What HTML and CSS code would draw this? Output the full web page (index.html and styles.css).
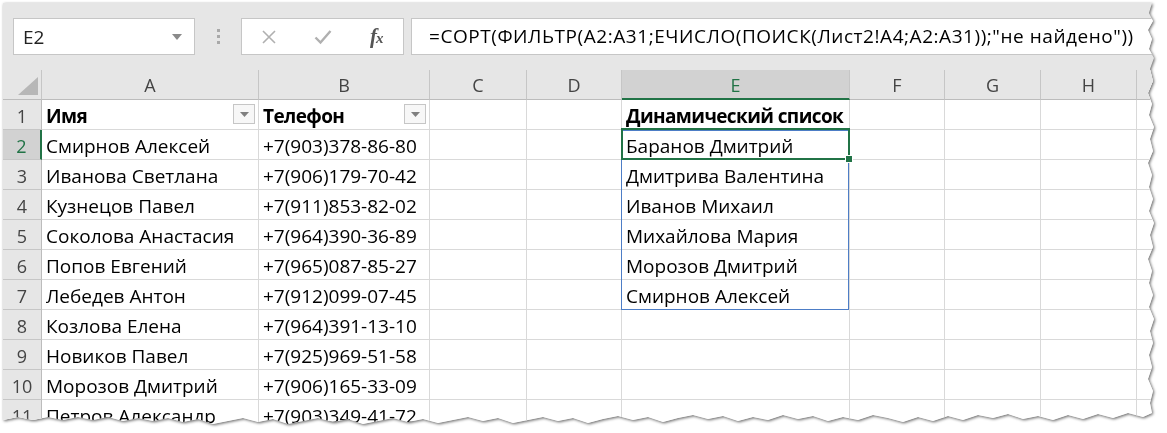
FILE: index.html
```html
<!DOCTYPE html>
<html lang="ru">
<head>
  <meta charset="UTF-8" />
  <title>Динамический список</title>
  <link rel="stylesheet" href="styles.css">
</head>
<body>
  <div class="shot">
    <div class="sheet">
      <div class="formula-bar">
        <div class="name-box">
          <span class="name">E2</span>
          <svg class="name-arrow" width="10" height="6" viewBox="0 0 10 6"><path d="M0 0h10L5 6z" fill="#8a8a8a"/></svg>
        </div>
        <div class="grip"><span></span><span></span><span></span></div>
        <div class="fx-buttons">
          <div class="fx-btn">
            <svg width="16" height="16" viewBox="0 0 16 16"><path d="M2 2l12 12M14 2L2 14" stroke="#b0b0b0" stroke-width="1.6" fill="none"/></svg>
          </div>
          <div class="fx-btn">
            <svg width="18" height="16" viewBox="0 0 18 16"><path d="M1.5 8.5l5 5L16.5 2" stroke="#b0b0b0" stroke-width="2.4" fill="none"/></svg>
          </div>
          <div class="fx-btn"><span class="fx">f<span class="fx-x">x</span></span></div>
        </div>
        <div class="formula">=СОРТ(ФИЛЬТР(A2:A31;ЕЧИСЛО(ПОИСК(Лист2!A4;A2:A31));"не найдено"))</div>
      </div>
      <div class="grid" id="grid"></div>
    </div>
  </div>

  <script>
    const grid = document.getElementById('grid');
    const letters = ['A', 'B', 'C', 'D', 'E', 'F', 'G', 'H', ''];

    const names = ['Имя', 'Смирнов Алексей', 'Иванова Светлана', 'Кузнецов Павел', 'Соколова Анастасия',
      'Попов Евгений', 'Лебедев Антон', 'Козлова Елена', 'Новиков Павел', 'Морозов Дмитрий', 'Петров Александр', 'Сидорова Ольга'];
    const phones = ['Телефон', '+7(903)378-86-80', '+7(906)179-70-42', '+7(911)853-82-02', '+7(964)390-36-89',
      '+7(965)087-85-27', '+7(912)099-07-45', '+7(964)391-13-10', '+7(925)969-51-58', '+7(906)165-33-09', '+7(903)349-41-72', '+7(916)402-17-33'];
    const sorted = ['Динамический список', 'Баранов Дмитрий', 'Дмитрива Валентина', 'Иванов Михаил',
      'Михайлова Мария', 'Морозов Дмитрий', 'Смирнов Алексей'];

    function cell(cls, text) {
      const div = document.createElement('div');
      div.className = cls;
      if (text) div.textContent = text;
      grid.appendChild(div);
      return div;
    }

    function filterBtn(parent) {
      const btn = document.createElement('span');
      btn.className = 'filter-btn';
      btn.innerHTML = '<svg width="9" height="5" viewBox="0 0 9 5"><path d="M0 0h9L4.5 5z" fill="#7f7f7f"/></svg>';
      parent.appendChild(btn);
    }

    // header row
    const corner = cell('head corner');
    corner.innerHTML = '<span class="corner-tri"></span>';
    letters.forEach(l => cell('head' + (l === 'E' ? ' active-col' : ''), l));

    for (let r = 1; r <= 12; r++) {
      const i = r - 1;
      cell('rowhead' + (r === 2 ? ' active-row' : ''), String(r));
      letters.forEach(l => {
        let text = '';
        if (l === 'A') text = names[i];
        if (l === 'B') text = phones[i];
        if (l === 'E') text = sorted[i] || '';
        const c = cell('cell' + (r === 1 && text ? ' bold' : ''), text);

        if (r === 1 && (l === 'A' || l === 'B')) filterBtn(c);
        if (r === 2 && l === 'E') {
          c.insertAdjacentHTML('beforeend', '<span class="spill"></span><span class="selection"><span class="handle"></span></span>');
        }
      });
    }
  </script>
</body>
</html>
```

FILE: styles.css
```css
body {
  margin: 0;
  background: #fff;
  font-family: "Open Sans", Arial, sans-serif;
}

.shot {
  width: 1156px;
  height: 428px;
  margin: 3px 0 0 3px;
  filter: drop-shadow(1px 1px 1.5px rgba(0, 0, 0, 0.6));
}

.sheet {
  height: 100%;
  background: #e6e6e6;
  overflow: hidden;
  clip-path: polygon(0 0, 1149px 0, 1146px 10px, 1150px 18px, 1145px 27px, 1149px 36px, 1146px 46px,
    1151px 55px, 1147px 66px, 1150px 78px, 1145px 90px, 1149px 101px, 1146px 112px, 1151px 124px,
    1147px 136px, 1150px 148px, 1145px 160px, 1149px 172px, 1146px 184px, 1150px 196px, 1146px 208px,
    1151px 220px, 1147px 232px, 1150px 244px, 1145px 256px, 1149px 268px, 1146px 280px, 1150px 292px,
    1146px 304px, 1151px 316px, 1147px 328px, 1150px 340px, 1146px 352px, 1149px 364px, 1145px 376px,
    1150px 388px, 1147px 400px, 1149px 410px,
    1140px 414px, 1125px 410px, 1110px 415px, 1095px 411px, 1080px 416px, 1065px 412px, 1050px 417px,
    1035px 413px, 1020px 416px, 1005px 411px, 990px 415px, 975px 412px, 960px 417px, 945px 413px,
    930px 418px, 915px 414px, 900px 419px, 885px 415px, 870px 412px, 855px 417px, 840px 414px,
    825px 418px, 810px 413px, 795px 416px, 780px 412px, 765px 417px, 750px 414px, 735px 418px,
    720px 413px, 705px 416px, 690px 412px, 675px 415px, 660px 419px, 645px 414px, 630px 417px,
    615px 413px, 600px 416px, 585px 420px, 570px 415px, 555px 418px, 540px 414px, 525px 417px,
    510px 420px, 495px 415px, 480px 418px, 465px 414px, 450px 417px, 435px 420px, 420px 416px,
    405px 419px, 390px 415px, 375px 418px, 360px 421px, 345px 416px, 330px 419px, 315px 415px,
    300px 418px, 285px 421px, 270px 416px, 255px 419px, 240px 415px, 225px 418px, 210px 421px,
    195px 416px, 180px 419px, 165px 415px, 150px 418px, 135px 415px, 120px 418px, 105px 414px,
    90px 417px, 75px 414px, 60px 417px, 45px 414px, 30px 417px, 15px 414px, 0 417px);
}

/* formula bar */

.formula-bar {
  display: flex;
  align-items: center;
  height: 67px;
  padding-left: 10px;
}

.name-box {
  width: 182px;
  height: 37px;
  box-sizing: border-box;
  background: #fff;
  border: 1px solid #c6c6c6;
  display: flex;
  align-items: center;
  justify-content: space-between;
  padding: 0 12px 0 9px;
}

.name {
  font-size: 19px;
  color: #222;
}

.grip {
  width: 46px;
  display: flex;
  flex-direction: column;
  align-items: center;
  gap: 3px;
}

.grip span {
  width: 3px;
  height: 3px;
  background: #a9a9a9;
}

.fx-buttons {
  width: 163px;
  height: 37px;
  box-sizing: border-box;
  background: #fff;
  border: 1px solid #c6c6c6;
  display: flex;
}

.fx-btn {
  width: 54px;
  display: flex;
  align-items: center;
  justify-content: center;
}

.fx {
  font-family: "Liberation Serif", "Times New Roman", serif;
  font-style: italic;
  font-weight: 700;
  font-size: 21px;
  color: #555;
  letter-spacing: -1px;
}

.fx-x {
  font-size: 15px;
}

.formula {
  flex: 1;
  margin-left: 7px;
  height: 37px;
  box-sizing: border-box;
  background: #fff;
  border: 1px solid #c6c6c6;
  padding-left: 17px;
  font-size: 19px;
  letter-spacing: 0.55px;
  line-height: 35px;
  color: #000;
  white-space: nowrap;
}

/* grid */

.grid {
  display: grid;
  grid-template-columns: 39px 217px 171px 97px 95px 228px 95px 96px 96px 1fr;
  grid-auto-rows: 30px;
  background: #fff;
}

.head {
  background: #e6e6e6;
  border-right: 1px solid #c6c6c6;
  border-bottom: 1px solid #bcbcbc;
  font-size: 18px;
  color: #444;
  text-align: center;
  line-height: 31px;
}

.corner {
  position: relative;
}

.corner-tri {
  position: absolute;
  right: 3px;
  bottom: 4px;
  width: 0;
  height: 0;
  border-left: 20px solid transparent;
  border-bottom: 18px solid #b7b7b7;
}

.head.active-col {
  background: #d2d2d2;
  color: #217346;
  border-bottom: 2px solid #217346;
}

.rowhead {
  background: #e6e6e6;
  border-right: 1px solid #bcbcbc;
  border-bottom: 1px solid #c6c6c6;
  font-size: 18px;
  color: #444;
  text-align: center;
  padding-top: 4px;
  line-height: 25px;
}

.rowhead.active-row {
  background: #d2d2d2;
  color: #217346;
  border-right: 2px solid #217346;
}

.cell {
  position: relative;
  border-right: 1px solid #d9d9d9;
  border-bottom: 1px solid #d9d9d9;
  padding: 4px 0 0 4px;
  font-size: 19px;
  line-height: 25px;
  color: #000;
  white-space: nowrap;
}

.bold {
  font-weight: 700;
  letter-spacing: -0.6px;
}

.filter-btn {
  position: absolute;
  right: 3px;
  top: 4px;
  width: 22px;
  height: 20px;
  box-sizing: border-box;
  background: #f7f7f7;
  border: 1px solid #c6c6c6;
  display: flex;
  align-items: center;
  justify-content: center;
}

.spill {
  position: absolute;
  z-index: 1;
  left: -1px;
  top: 0;
  width: 228px;
  height: 180px;
  box-sizing: border-box;
  border: 1px solid #4d7dc6;
}

.selection {
  position: absolute;
  z-index: 2;
  left: -1px;
  top: -2px;
  right: -1px;
  bottom: -1px;
  border: 2px solid #217346;
}

.handle {
  position: absolute;
  right: -5px;
  bottom: -5px;
  width: 6px;
  height: 6px;
  background: #217346;
  border: 1px solid #fff;
}
```
